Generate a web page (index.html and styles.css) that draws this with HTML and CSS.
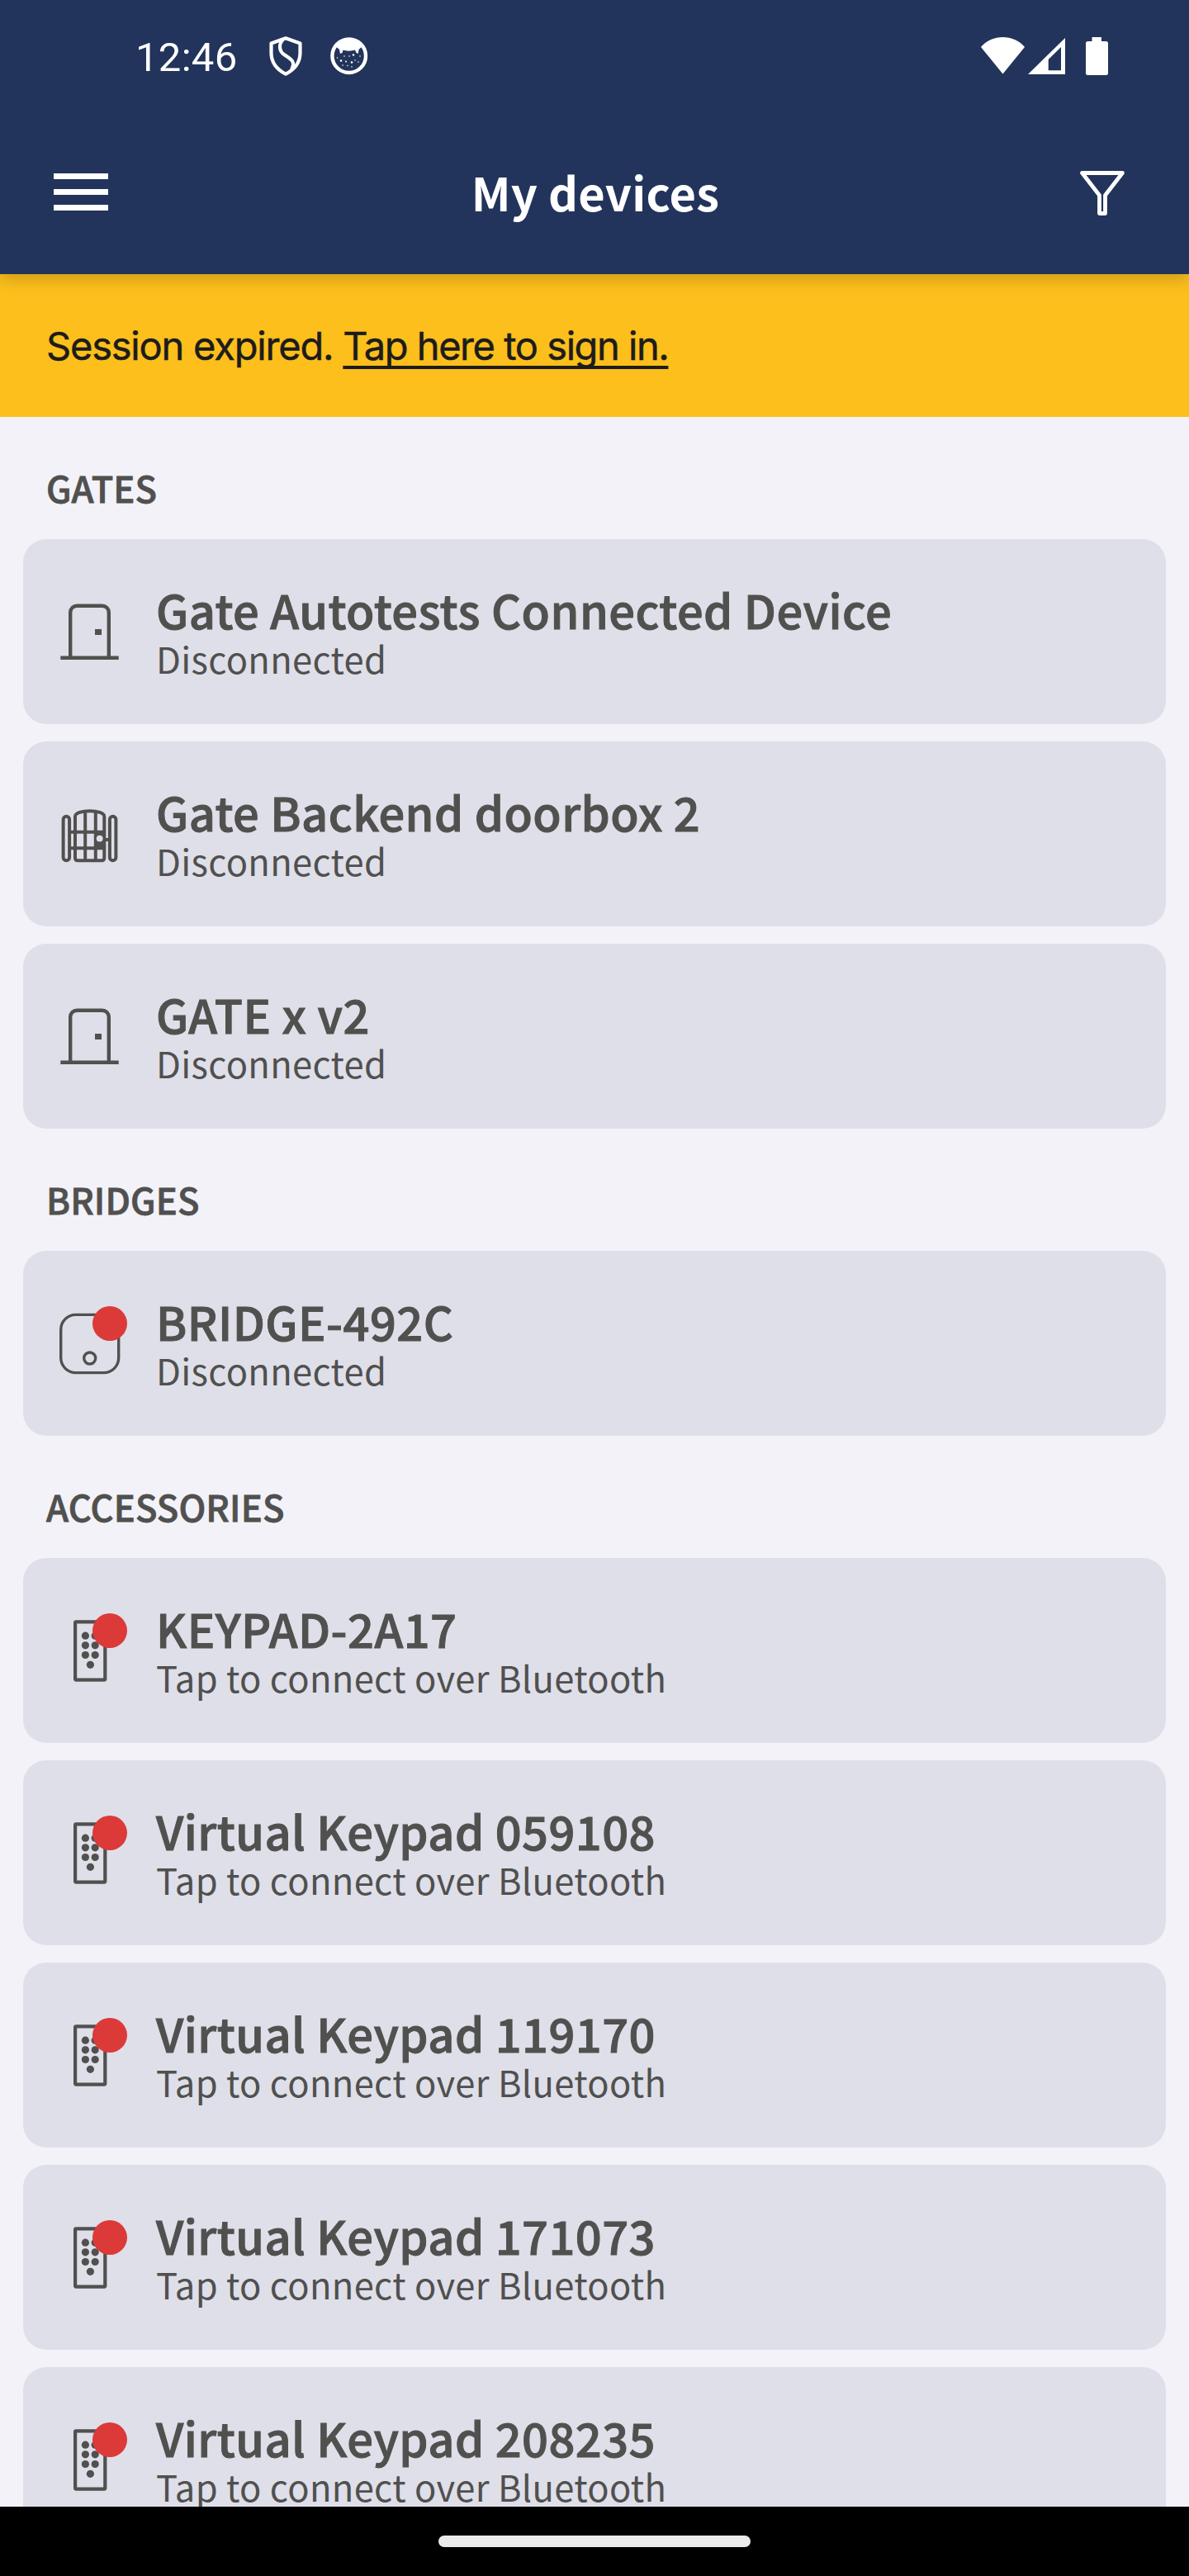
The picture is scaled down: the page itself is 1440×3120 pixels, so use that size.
FILE: index.html
```html
<!DOCTYPE html>
<html lang="en">
<head>
<meta charset="utf-8">
<title>My devices</title>
<link rel="stylesheet" href="styles.css">
</head>
<body>
<svg class="defs" aria-hidden="true">
  <symbol id="door" viewBox="0 0 84 84"><g fill="none" stroke="currentColor" stroke-width="4.4"><path d="M19.2 73.8V18.7a8 8 0 0 1 8-8h30.6a8 8 0 0 1 8 8v55.1M7.3 73.8h70.4"/></g><path fill="currentColor" d="M49 39h8v7h-8z"/></symbol>
  <symbol id="gate" viewBox="0 0 84 84"><g fill="none" stroke="currentColor" stroke-width="4"><rect x="10.6" y="20.7" width="7.5" height="53.6" rx="3.75"/><rect x="66.9" y="20.7" width="7.5" height="53.6" rx="3.75"/><path d="M25 21c0-9 35.300-9 35.300 0v50q0 3.300-3.300 3.300H28.300q-3.300 0-3.300-3.300zM37.200 15v59M49.800 15v59M20 39.800h40M20 59.200h40M60 49h7"/></g><path fill="currentColor" d="M50 40h12v20H50z"/><circle cx="54.700" cy="47.700" r="3.900" fill="#dfdfe9"/></symbol>
  <symbol id="bridge" viewBox="0 0 84 84"><g fill="none" stroke="currentColor" stroke-width="3.400"><rect x="7.700" y="7.400" width="70" height="70.200" rx="18"/><circle cx="42.700" cy="60" r="7"/></g></symbol>
  <symbol id="keypad" viewBox="0 0 84 84"><rect x="25.100" y="7.400" width="36.200" height="70.200" rx="1" fill="none" stroke="currentColor" stroke-width="4.200"/><g fill="currentColor"><circle cx="37.400" cy="24.200" r="4.600"/><circle cx="49.200" cy="24.200" r="4.600"/><circle cx="37.400" cy="35.800" r="4.600"/><circle cx="49.200" cy="35.800" r="4.600"/><circle cx="37.400" cy="47.500" r="4.600"/><circle cx="49.200" cy="47.500" r="4.600"/><circle cx="43.400" cy="59.300" r="4.600"/></g></symbol>
</svg>
<div class="screen">
  <header class="top">
    <div class="status">
      <div class="status-left">
        <span class="clock">12:46</span>
        <svg class="shield" width="40" height="48" viewBox="0 0 40 48" fill="none" stroke="#fff" stroke-width="4.200" stroke-linejoin="round"><path d="M20 2.300 37.500 8.500V20C37.500 33 30 40.500 20 45.700 10 40.500 2.500 33 2.500 20V8.500z"/><path d="M17 4C11 9 12 18 18 22C25 27 33 30 27 40"/></svg>
        <svg class="face" width="46" height="46" viewBox="0 0 46 46"><circle cx="22.700" cy="22.700" r="20.300" fill="none" stroke="#fff" stroke-width="4.400"/><path fill="#fff" d="M6.500 11C14 1 32 1 39 11L34.500 15 33.800 20 31.500 19 30 15.500C26 17 19 17 15.500 15.500L14.500 19 12 20 11 15z"/><g fill="#fff"><circle cx="13" cy="28.500" r="1.300"/><circle cx="19" cy="29.500" r="1"/><circle cx="26" cy="30.500" r="1.300"/><circle cx="17" cy="23" r=".8"/><circle cx="23" cy="23" r=".8"/><circle cx="28" cy="21.500" r="1.200"/><circle cx="30" cy="28" r=".8"/><circle cx="34" cy="30" r=".8"/><circle cx="36" cy="23" r=".8"/><circle cx="15" cy="34" r=".8"/><circle cx="21" cy="34.500" r=".8"/><circle cx="26" cy="36" r=".8"/><circle cx="8.500" cy="25" r=".8"/></g></svg>
      </div>
      <svg class="signals" width="156" height="48" viewBox="1187 44 156 48" fill="#fff"><path d="M1188 57C1201 41 1228 41 1241 57L1214.500 89.500z"/><path fill-rule="evenodd" d="M1290 46v44h-45zM1285 57l-15.300 15v13.300H1285z"/><path d="M1322.500 45h11.500v5h5.500a2.500 2.500 0 0 1 2.500 2.500v36a2.500 2.500 0 0 1-2.500 2.500h-22a2.500 2.500 0 0 1-2.500-2.500v-36a2.500 2.500 0 0 1 2.500-2.500h5z"/></svg>
    </div>
    <div class="appbar">
      <svg width="66" height="48" viewBox="0 0 66 48" fill="#fff"><path d="M0 0h66v7H0zM0 19h66v7H0zM0 38h66v7H0z"/></svg>
      <h1 class="heading">My devices</h1>
      <svg width="54" height="54" viewBox="0 0 54 54" fill="none" stroke="#fff" stroke-width="4.800" stroke-linejoin="round"><path d="M2.600 2.500h48.800L30.500 29.500V51.500h-7V29.500z"/></svg>
    </div>
  </header>
  <div class="banner"><p class="banner-text">Session expired. <a class="signin">Tap here to sign in.</a></p></div>
  <main class="list">
    <h2 class="section">GATES</h2>
    <div class="cards">
      <div class="card"><div class="icon"><svg><use href="#door"/></svg></div><div><div class="name">Gate Autotests Connected Device</div><div class="state">Disconnected</div></div></div>
      <div class="card"><div class="icon"><svg><use href="#gate"/></svg></div><div><div class="name">Gate Backend doorbox 2</div><div class="state">Disconnected</div></div></div>
      <div class="card"><div class="icon"><svg><use href="#door"/></svg></div><div><div class="name">GATE x v2</div><div class="state">Disconnected</div></div></div>
    </div>
    <h2 class="section">BRIDGES</h2>
    <div class="cards">
      <div class="card"><div class="icon alert"><svg><use href="#bridge"/></svg></div><div><div class="name">BRIDGE-492C</div><div class="state">Disconnected</div></div></div>
    </div>
    <h2 class="section">ACCESSORIES</h2>
    <div class="cards">
      <div class="card"><div class="icon alert"><svg><use href="#keypad"/></svg></div><div><div class="name">KEYPAD-2A17</div><div class="state">Tap to connect over Bluetooth</div></div></div>
      <div class="card"><div class="icon alert"><svg><use href="#keypad"/></svg></div><div><div class="name">Virtual Keypad 059108</div><div class="state">Tap to connect over Bluetooth</div></div></div>
      <div class="card"><div class="icon alert"><svg><use href="#keypad"/></svg></div><div><div class="name">Virtual Keypad 119170</div><div class="state">Tap to connect over Bluetooth</div></div></div>
      <div class="card"><div class="icon alert"><svg><use href="#keypad"/></svg></div><div><div class="name">Virtual Keypad 171073</div><div class="state">Tap to connect over Bluetooth</div></div></div>
      <div class="card"><div class="icon alert"><svg><use href="#keypad"/></svg></div><div><div class="name">Virtual Keypad 208235</div><div class="state">Tap to connect over Bluetooth</div></div></div>
    </div>
  </main>
  <footer class="nav"><div class="pill"></div></footer>
</div>
</body>
</html>
```
FILE: styles.css
```css
* { box-sizing: border-box; margin: 0; padding: 0; }
body { background: #f3f2f8; font-family: "Noto Sans CJK SC", sans-serif; color: #50504f; }
.defs { display: none; }
svg { display: block; flex: none; }
.screen { width: 1440px; height: 3120px; overflow: hidden; display: flex; flex-direction: column; }
.top { flex: none; height: 332px; background: #22345b; color: #fff; z-index: 1; box-shadow: 0 4px 20px rgba(0, 0, 0, .22); }
.status { height: 136px; display: flex; justify-content: space-between; align-items: center; padding: 0 97px 0 164px; }
.status-left { display: flex; align-items: center; }
.clock { width: 162px; font: 400 49px/56px Roboto, sans-serif; letter-spacing: .3px; padding-top: 4px; }
.face { margin-left: 34px; }
.appbar { height: 196px; display: flex; justify-content: space-between; align-items: center; padding: 0 78px 0 65px; }
.heading { font-size: 56px; line-height: 80px; font-weight: 700; letter-spacing: .2px; white-space: nowrap; padding: 0 0 4px 3px; }
.banner { flex: none; height: 173px; background: #fcbf1c; padding: 0 56px; display: flex; align-items: center; }
.banner-text { font: 400 47px/60px Inter, sans-serif; letter-spacing: -1.2px; -webkit-text-stroke: .5px; color: #1c1c1c; white-space: nowrap; }
.signin { letter-spacing: -1.45px; text-decoration: underline; text-decoration-thickness: 4px; text-underline-offset: 7px; text-decoration-skip-ink: none; }
.list { flex: 1; min-height: 0; overflow: hidden; padding: 0 28px; }
.section { height: 148px; padding: 56px 28px 0; font-size: 43.500px; line-height: 60px; font-weight: 500; letter-spacing: .15px; -webkit-text-stroke: .8px; }
.cards { display: flex; flex-direction: column; gap: 21px; }
.card { height: 224px; border-radius: 28px; background: #dfdfe9; display: flex; align-items: center; gap: 39px; padding-left: 38px; white-space: nowrap; }
.icon { position: relative; width: 84px; height: 84px; flex: none; }
.icon svg { width: 84px; height: 84px; }
.alert::after { content: ""; position: absolute; left: 46px; top: -3px; width: 42px; height: 42px; border-radius: 50%; background: #dc3939; }
.name { font-size: 56px; line-height: 66px; font-weight: 500; letter-spacing: .45px; -webkit-text-stroke: 1px; }
.state { font-size: 43.500px; line-height: 54px; letter-spacing: .32px; }
.nav { flex: none; height: 84px; background: #000; display: flex; justify-content: center; align-items: center; }
.pill { width: 378px; height: 14px; border-radius: 7px; background: #ebebeb; }
```
